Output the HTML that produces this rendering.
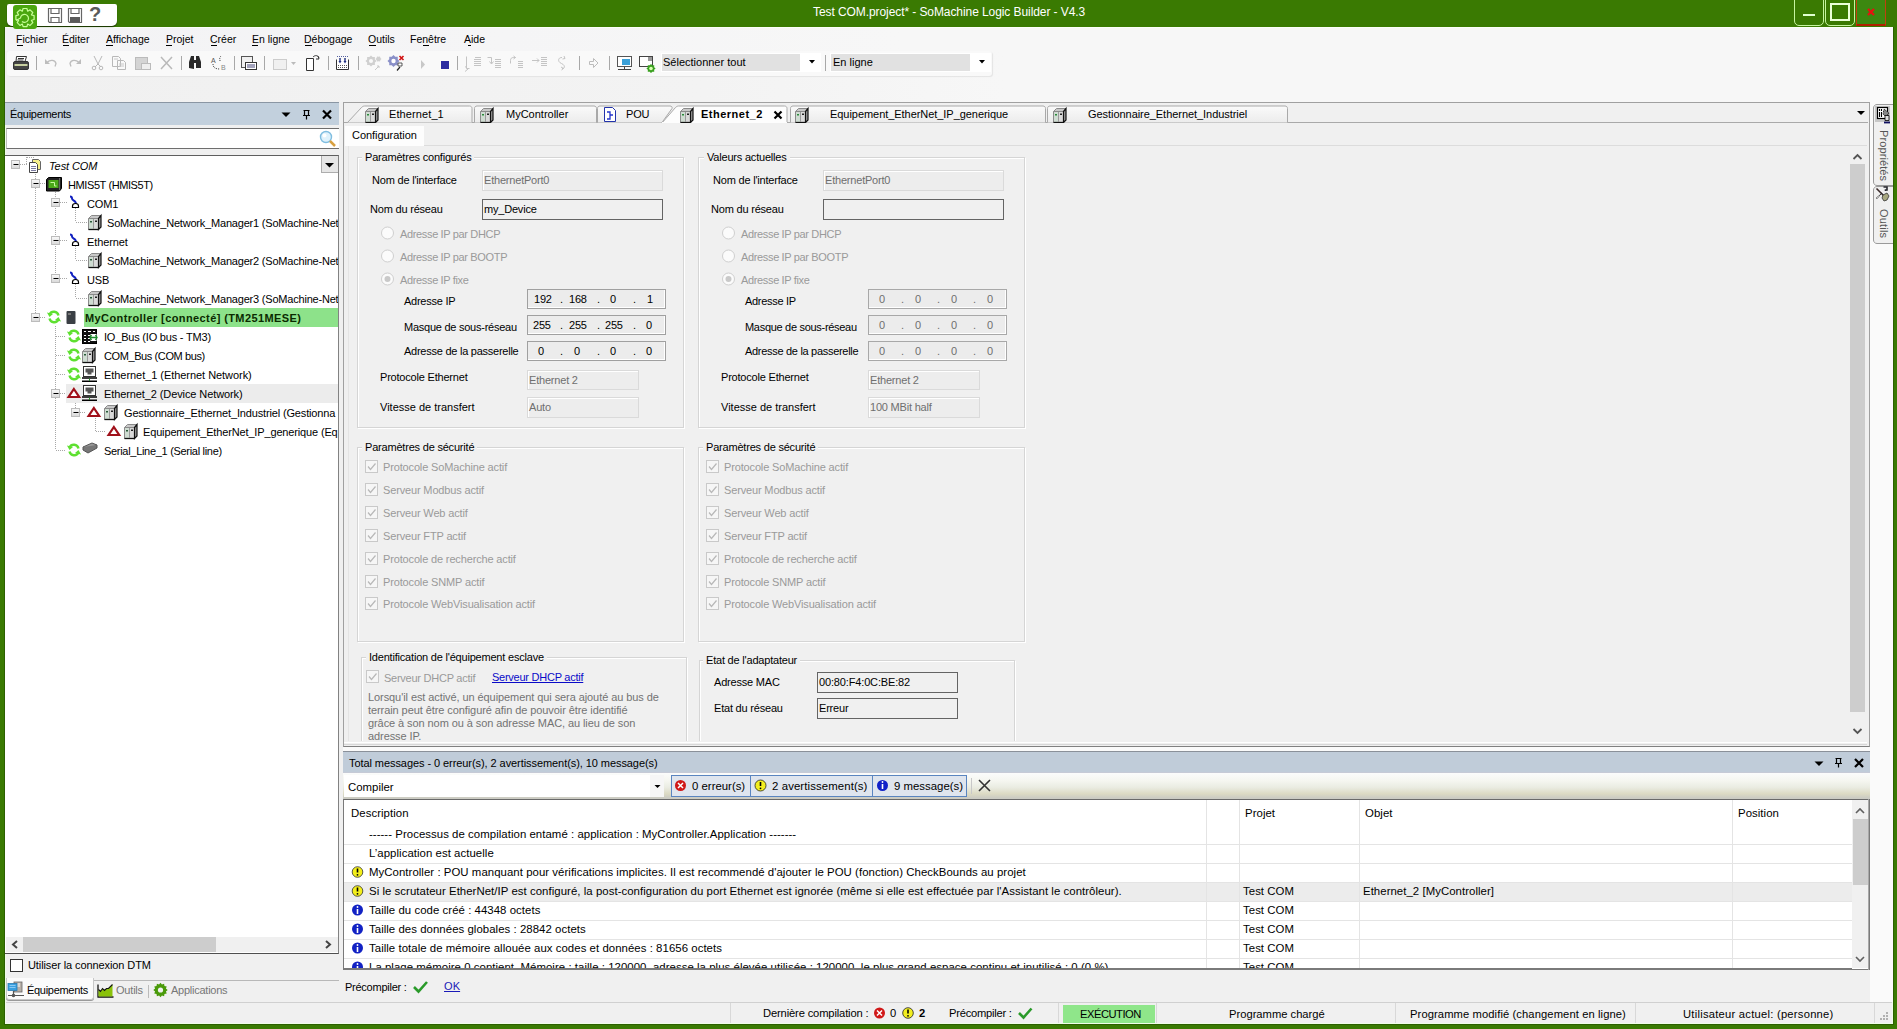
<!DOCTYPE html>
<html><head><meta charset="utf-8">
<style>
*{box-sizing:border-box;margin:0;padding:0}
html,body{width:1897px;height:1029px;overflow:hidden;background:#3a7a02;font-family:"Liberation Sans",sans-serif;font-size:11px;color:#000}
.a{position:absolute}
.t{position:absolute;white-space:pre;line-height:13px;font-size:11px}
.e{letter-spacing:-0.2px}
.g{color:#9a9a9a}
.gi{color:#6f6f6f}
.gb{position:absolute;border:1px solid #d5d5d5;box-shadow:inset 1px 1px 0 #fff,1px 1px 0 #fff}
.tb{position:absolute;border:1px solid #dadada;background:#ededed;box-shadow:inset 1px 1px 0 #fff}
.ip{position:absolute;border:1px solid #9c9c9c;background:#f0f0f0;box-shadow:inset 1px 1px 0 #fff}
.cb{position:absolute;width:13px;height:13px;border:1px solid #c8c8c8;background:#f4f4f4}
</style></head><body>
<!-- inner window -->
<div class="a" style="left:4px;top:27px;width:1890px;height:998px;background:#f0f0f0;border:1px solid #2c6000;border-top:none;box-shadow:inset 1px 0 0 #effee8,inset -1px -1px 0 #effee8"></div>
<div class="a" style="left:5px;top:27px;width:1888px;height:24px;background:linear-gradient(90deg,#f3f3f5 0,#f5f5f6 500px,#f7f7f7 900px)"></div>
<div class="a" style="left:5px;top:51px;width:1888px;height:51px;background:linear-gradient(90deg,#f0f0f0 0,#f3f3f3 700px,#f7f7f7 1000px)"></div>
<!-- right strip -->
<div class="a" style="left:1870px;top:27px;width:23px;height:975px;background:#fafafa"></div>

<div class="a" style="left:5px;top:27px;width:1888px;height:1px;background:#fbfff8"></div>
<!-- title bar -->
<div class="a" style="left:7px;top:4px;width:110px;height:22px;background:#fff;border-radius:2px 2px 5px 5px;box-shadow:0 1px 1px #1a3300"></div>
<div class="a" style="left:13px;top:5px;width:24px;height:24px;background:#4ba70f;border-radius:3px"></div>
<svg class="a" style="left:0;top:0" width="40" height="32" viewBox="0 0 40 32"><path d="M22.38 11.11 L23.07 8.50 L26.93 8.50 L27.62 11.11 L27.74 11.16 L30.07 9.80 L32.80 12.53 L31.44 14.86 L31.49 14.98 L34.10 15.67 L34.10 19.53 L31.49 20.22 L31.44 20.34 L32.80 22.67 L30.07 25.40 L27.74 24.04 L27.62 24.09 L26.93 26.70 L23.07 26.70 L22.38 24.09 L22.26 24.04 L19.93 25.40 L17.20 22.67 L18.56 20.34 L18.51 20.22 L15.90 19.53 L15.90 15.67 L18.51 14.98 L18.56 14.86 L17.20 12.53 L19.93 9.80 L22.26 11.16Z" fill="none" stroke="#c8ff98" stroke-width="1.2" stroke-linejoin="round"/><path d="M22 21.5a4 4 0 1 0-1.5-3.5L16 20.5" fill="none" stroke="#c8ff98" stroke-width="1.2"/></svg>
<svg class="a" style="left:47px;top:7px" width="16" height="16" viewBox="0 0 16 16"><path d="M1.5 1.5h13v14h-12l-1-1z M4 1.5v5h8v-5 M4 15.5v-5h8v5" fill="none" stroke="#666" stroke-width="1.2"/></svg>
<svg class="a" style="left:67px;top:7px" width="16" height="16" viewBox="0 0 16 16"><path d="M1.5 1.5h13v14h-12l-1-1z M4 1.5v5h8v-5" fill="none" stroke="#666" stroke-width="1.2"/><rect x="3" y="10" width="10" height="5.5" fill="#5a5a5a"/></svg>
<div class="a" style="left:89px;top:3px;font:bold 20px 'Liberation Sans';color:#5a5a5a;line-height:22px">?</div>
<div class="t" style="left:813px;top:5px;font-size:12px;color:#fff;line-height:14px;letter-spacing:-0.08px">Test COM.project* - SoMachine Logic Builder - V4.3</div>
<!-- window buttons -->
<div class="a" style="left:1794px;top:-3px;width:30px;height:29px;border:1px solid #c6f5a0;border-radius:0 0 5px 5px"></div>
<div class="a" style="left:1803px;top:14px;width:12px;height:2px;background:#e0ffd0"></div>
<div class="a" style="left:1825px;top:-3px;width:30px;height:29px;border:1px solid #c6f5a0;border-radius:0 0 5px 5px"></div>
<div class="a" style="left:1830px;top:3px;width:20px;height:18px;border:2px solid #eaffd8"></div>
<div class="a" style="left:1856px;top:-3px;width:30px;height:29px;border:1px solid #c04010;border-bottom:2px solid #b02000;background:#3c8810"></div>
<svg class="a" style="left:1866px;top:7px" width="10" height="10"><path d="M2 2l6 6M8 2l-6 6" stroke="#e81010" stroke-width="2.2"/></svg>

<!-- menubar -->
<div class="t" style="left:16px;top:33px;font-size:10.5px">Fichier</div>
<div class="t" style="left:62px;top:33px;font-size:10.5px">Éditer</div>
<div class="t" style="left:106px;top:33px;font-size:10.5px">Affichage</div>
<div class="t" style="left:166px;top:33px;font-size:10.5px">Projet</div>
<div class="t" style="left:210px;top:33px;font-size:10.5px">Créer</div>
<div class="t" style="left:252px;top:33px;font-size:10.5px">En ligne</div>
<div class="t" style="left:304px;top:33px;font-size:10.5px">Débogage</div>
<div class="t" style="left:368px;top:33px;font-size:10.5px">Outils</div>
<div class="t" style="left:410px;top:33px;font-size:10.5px">Fenêtre</div>
<div class="t" style="left:464px;top:33px;font-size:10.5px">Aide</div>
<div class="a" style="left:17px;top:45px;width:6px;height:1px;background:#000"></div>
<div class="a" style="left:63px;top:45px;width:6px;height:1px;background:#000"></div>
<div class="a" style="left:106px;top:45px;width:7px;height:1px;background:#000"></div>
<div class="a" style="left:166px;top:45px;width:6px;height:1px;background:#000"></div>
<div class="a" style="left:211px;top:45px;width:6px;height:1px;background:#000"></div>
<div class="a" style="left:252px;top:45px;width:6px;height:1px;background:#000"></div>
<div class="a" style="left:305px;top:45px;width:7px;height:1px;background:#000"></div>
<div class="a" style="left:369px;top:45px;width:7px;height:1px;background:#000"></div>
<div class="a" style="left:423px;top:45px;width:6px;height:1px;background:#000"></div>
<div class="a" style="left:468px;top:45px;width:3px;height:1px;background:#000"></div>

<!-- toolbar -->
<div class="a" style="left:7px;top:51px;width:985px;height:25px;background:#f9f9f9;border-radius:3px;box-shadow:1px 1px 1px #e4e4e4"></div>
<svg class="a" style="left:0;top:50px" width="1000" height="26" viewBox="0 50 1000 26">
<g fill="none" stroke-width="1">
<!-- printer -->
<path d="M16.5 56.5h10l-1.5 5h-9z" stroke="#333" fill="#fff"/>
<path d="M18 58.5h6M17.5 60h6" stroke="#333"/>
<rect x="13.5" y="61.5" width="15" height="8" rx="1.5" fill="#444" stroke="#333"/>
<rect x="14.5" y="64" width="13" height="2" fill="#c8d0a0" stroke="none"/>
<!-- separators -->
<path d="M36.5 56v14M181.5 56v14M234.5 56v14M264.5 56v14M328.5 56v14M358.5 56v14M457.5 56v14M579.5 56v14M609.5 56v14M825.5 55v16" stroke="#a8a8a8"/>
<!-- undo/redo -->
<path d="M47 62.5c3-3 8-3 9 1l-1 3" stroke="#bdbdbd" stroke-width="1.3"/><path d="M45 59v5h5z" fill="#bdbdbd" stroke="none"/>
<path d="M79 62.5c-3-3-8-3-9 1l1 3" stroke="#bdbdbd" stroke-width="1.3"/><path d="M81 59v5h-5z" fill="#bdbdbd" stroke="none"/>
<!-- scissors -->
<path d="M94 56l4 8 4-8M98 64l-3 3M98 64l3 3" stroke="#b8b8b8"/><circle cx="94" cy="68" r="1.8" stroke="#b8b8b8"/><circle cx="101" cy="68" r="1.8" stroke="#b8b8b8"/>
<!-- copy -->
<path d="M112.5 56.5h6l2 2v8h-8z M117.5 60.5h6l2 2v7h-8z" stroke="#b8b8b8" fill="#f9f9f9"/><path d="M119 64h5M119 66h5M114 59h4" stroke="#c8c8c8"/>
<!-- paste -->
<rect x="135.5" y="57.5" width="12" height="12" stroke="#bbb" fill="#d4d4d4"/><rect x="141.5" y="63.5" width="9" height="6" stroke="#bbb" fill="#eee"/>
<!-- delete X -->
<path d="M161 57l11 12M172 57l-11 12" stroke="#b9b9b9" stroke-width="1.5"/>
<!-- binoculars -->
<path d="M189 68v-6l2-6h3v13zM196 56h3l2 6v6h-5z" fill="#2a2a2a" stroke="none"/><rect x="194" y="60" width="2" height="3" fill="#2a2a2a"/>
<!-- AB -->
<text x="211" y="63" font-family="Liberation Sans" font-size="7" fill="#555">A</text><text x="221" y="70" font-family="Liberation Sans" font-size="7" fill="#888">B</text>
<path d="M213 64c0 4 3 5 7 5M220 61c0-2-1-3 1-5" stroke="#444" stroke-dasharray="1 1"/>
<!-- icon 249 -->
<rect x="241.5" y="56.5" width="11" height="11" stroke="#555" fill="#f0f0f0"/><rect x="245.5" y="62.5" width="11" height="7" stroke="#333" fill="#fff"/><path d="M247 65h8M247 67h8" stroke="#447"/>
<!-- gray icon -->
<rect x="273.5" y="59.5" width="13" height="10" stroke="#ccc" fill="#f0f0f0"/><path d="M291 62h5l-2.5 3z" fill="#bbb" stroke="none"/>
<!-- page -->
<path d="M306.5 58.5h7v12h-7z" stroke="#333" fill="#fff"/><path d="M313 57c2-2 5-2 6 1" stroke="#333"/><path d="M318 56l1 3-3 0" stroke="#333"/>
<!-- calendar -->
<path d="M336.5 59.5v10h12v-10" stroke="#333" fill="#fff"/><path d="M338 65.5h9M338 67.5h9" stroke="#555" stroke-dasharray="1 1"/><path d="M337 56.5h11" stroke="#5560a0" stroke-dasharray="1 1"/><path d="M340 58v4M345 58v4" stroke="#203080" stroke-width="1.4"/><path d="M338.5 61l1.5 2.5 1.5-2.5zM343.5 61l1.5 2.5 1.5-2.5z" fill="#203080"/>
<!-- gray gear -->
<path d="M376.50 61.00 L374.88 62.61 L374.89 64.89 L372.61 64.88 L371.00 66.50 L369.39 64.88 L367.11 64.89 L367.12 62.61 L365.50 61.00 L367.12 59.39 L367.11 57.11 L369.39 57.12 L371.00 55.50 L372.61 57.12 L374.89 57.11 L374.88 59.39Z" fill="#d0d0d0"/><circle cx="371" cy="61" r="2" fill="#f9f9f9"/><path d="M381.50 59.00 L380.41 60.10 L380.00 61.60 L378.50 61.20 L377.00 61.60 L376.59 60.10 L375.50 59.00 L376.59 57.90 L377.00 56.40 L378.50 56.80 L380.00 56.40 L380.41 57.90Z" fill="#d0d0d0"/><path d="M375 70l4-4M377 66h2v2" stroke="#c8c8c8"/>
<!-- gear with x -->
<path d="M399.50 61.00 L397.75 62.76 L397.74 65.24 L395.26 65.25 L393.50 67.00 L391.74 65.25 L389.26 65.24 L389.25 62.76 L387.50 61.00 L389.25 59.24 L389.26 56.76 L391.74 56.75 L393.50 55.00 L395.26 56.75 L397.74 56.76 L397.75 59.24Z" fill="#8a90c8"/><circle cx="393.5" cy="61" r="2.2" fill="#fff"/><path d="M399.5 56l4 4M403.5 56l-4 4" stroke="#d01010" stroke-width="1.6"/><path d="M398 63h4v3h-4z" fill="#fff" stroke="#333" stroke-width=".8"/><path d="M397 70.5l3-3.5" stroke="#222" stroke-width="1.2"/>
<!-- play -->
<path d="M421 60v9l4-4.5z" fill="#c8c8c8" stroke="none"/>
<!-- stop -->
<rect x="441" y="61" width="8" height="8" fill="#2b2ba0" stroke="none"/>
<!-- indent icons -->
<path d="M466.5 56.5v12h3M465 66.5l3 2.5-3 2.5M475 57.5h6M474 59.5h7M474 61.5h7M474 63.5h7M474 65.5h7" stroke="#c4c4c4"/>
<path d="M487.5 57.5h4v6M489.5 61.5l2 2.5 2-2.5M495 59.5h6M495 61.5h6M495 63.5h6M495 65.5h6M495 67.5h6" stroke="#c4c4c4"/>
<path d="M510.5 63.5v-3c0-2 1-3 3-3h2M513.5 56l2 1.5-2 1.5M518 61.5h5M518 63.5h5M518 65.5h5M518 67.5h5" stroke="#c4c4c4"/>
<path d="M532 60.5h7M537 58.5l2 2-2 2M541 57.5h6M541 59.5h6M541 61.5h6M541 63.5h6M541 65.5h6" stroke="#c4c4c4"/>
<path d="M562 57.5c-3 0-4 2-3 4 1 2 4 2 5 4s0 3-2 3M564 56l1 2.5-2.5 .5M561 67l2.5 1.5-2 1.5" stroke="#c4c4c4"/>
<!-- arrow right -->
<path d="M589.5 61.5h4v-3l4.5 4.5-4.5 4.5v-3h-4z" stroke="#bcbcbc"/>
<!-- monitor -->
<rect x="617.5" y="56.5" width="14" height="10" stroke="#555" fill="#fff"/><rect x="622" y="59" width="8" height="6" fill="#3ba0d8" stroke="none"/><path d="M624.5 67v2M618 69.5h13" stroke="#444"/>
<!-- monitor w gear -->
<rect x="639.5" y="56.5" width="13" height="10" stroke="#444" fill="#fff"/><rect x="648" y="57" width="4" height="4" fill="#999"/><path d="M655.60 68.50 L654.14 69.80 L654.25 71.75 L652.30 71.64 L651.00 73.10 L649.70 71.64 L647.75 71.75 L647.86 69.80 L646.40 68.50 L647.86 67.20 L647.75 65.25 L649.70 65.36 L651.00 63.90 L652.30 65.36 L654.25 65.25 L654.14 67.20Z" fill="#3aa020" stroke="none"/><circle cx="651" cy="68.5" r="1.8" fill="#d8ffb0"/>
<!-- combo arrows -->

</g></svg>
<div class="a" style="left:661px;top:53px;width:160px;height:19px;background:#fff"></div><div class="a" style="left:662px;top:54px;width:138px;height:17px;background:#e1e1e1"></div>
<div class="t" style="left:663px;top:56px">Sélectionner tout</div>
<div class="a" style="left:830px;top:53px;width:161px;height:19px;background:#fff"></div><div class="a" style="left:831px;top:54px;width:139px;height:17px;background:#e1e1e1"></div>
<div class="t" style="left:833px;top:56px">En ligne</div>
<svg class="a" style="left:800px;top:55px" width="190" height="15" viewBox="800 55 190 15"><path d="M809 60h6l-3 3.5z M979 60h6l-3 3.5z" fill="#000"/></svg>

<!-- left panel -->
<div class="a" style="left:5px;top:102px;width:334px;height:23px;background:#c2d0dd;border-top:1px solid #8a96a3"></div>
<div class="t" style="left:10px;top:108px;letter-spacing:-0.3px">Équipements</div>
<svg class="a" style="left:278px;top:106px" width="60" height="16" viewBox="278 106 60 16">
<path d="M281.5 112.5h9l-4.5 4.5z" fill="#000"/>
<path d="M303.5 110.5h6M304.5 110.5v5M308.5 110.5v5M303 115.5h7M306.5 115.5v4" stroke="#000" stroke-width="1.2" fill="none"/>
<path d="M323 110.5l8 8M331 110.5l-8 8" stroke="#000" stroke-width="2.2"/>
</svg>
<div class="a" style="left:6px;top:128px;width:333px;height:21px;background:#fff;border-top:1px solid #6e6e6e;border-bottom:1px solid #6e6e6e;border-left:1px solid #bdbdbd"></div>
<svg class="a" style="left:318px;top:130px" width="20" height="18" viewBox="0 0 20 18"><circle cx="8" cy="7" r="5.5" fill="#dff2fc" stroke="#7fbde0" stroke-width="1.4"/><circle cx="6.5" cy="5.5" r="2" fill="#fff"/><path d="M12 11l5 5" stroke="#d8a040" stroke-width="2.5"/></svg>
<div class="a" style="left:5px;top:155px;width:334px;height:799px;background:#fff;border-top:1px solid #5f5f5f;border-right:1px solid #828282;border-bottom:1px solid #4f4f4f"></div>
<div class="a" style="left:321px;top:156px;width:17px;height:17px;background:#e6e6e6;border:1px solid #adadad;border-top:none;border-right:none"></div>
<svg class="a" style="left:321px;top:156px" width="17" height="17"><path d="M4 7h9l-4.5 4.5z" fill="#000"/></svg>
<!-- tree lines -->
<svg class="a" style="left:5px;top:155px" width="334" height="310" viewBox="5 155 334 310">
<g stroke="#a8a8a8" stroke-width="1" stroke-dasharray="1 1" fill="none">
<path d="M20 164.5h8M35.5 170v10M40 183.5h6M35.5 188v126M55.5 188v11M60 202.5h8M55.5 208v29M60 240.5h8M55.5 246v29M60 278.5h8"/>
<path d="M75.5 208v14M76 222.5h12M75.5 246v14M76 260.5h12M75.5 284v14M76 298.5h12"/>
<path d="M40 317.5h6M55.5 326v124M56 450.5h10M56 336.5h10M56 355.5h10M56 374.5h10M60 393.5h6"/>
<path d="M75.5 403v6M80 412.5h6M95.5 418v13M96 431.5h10"/>
<path d="M26.5 157v8M27 157.5h8"/>
</g>
<defs><linearGradient id="eg" x1="0" y1="0" x2="0" y2="1"><stop offset="0" stop-color="#fafafa"/><stop offset="1" stop-color="#d8d8d8"/></linearGradient></defs><g fill="url(#eg)" stroke="#bcbcbc">
<rect x="11.5" y="160.5" width="8" height="8"/><rect x="31.5" y="179.5" width="8" height="8"/>
<rect x="51.5" y="198.5" width="8" height="8"/><rect x="51.5" y="236.5" width="8" height="8"/><rect x="51.5" y="274.5" width="8" height="8"/>
<rect x="31.5" y="313.5" width="8" height="8"/><rect x="51.5" y="389.5" width="8" height="8"/><rect x="71.5" y="408.5" width="8" height="8"/>
</g>
<g stroke="#000" stroke-width="1.2"><path d="M13.5 164.5h5M33.5 183.5h5M53.5 202.5h5M53.5 240.5h5M53.5 278.5h5M33.5 317.5h5M53.5 393.5h5M73.5 412.5h5"/></g>
</g>
</svg>
<!-- highlights -->
<div class="a" style="left:84px;top:308px;width:254px;height:19px;background:#8de28a"></div>
<div class="a" style="left:66px;top:384px;width:272px;height:19px;background:#ececec"></div>
<!-- tree text -->
<div class="t" style="left:49px;top:160px;font-style:italic;letter-spacing:-0.1px">Test COM</div>
<div class="t" style="left:68px;top:179px;letter-spacing:-0.4px">HMIS5T (HMIS5T)</div>
<div class="t" style="left:87px;top:198px;letter-spacing:-0.1px">COM1</div>
<div class="t" style="left:107px;top:217px;letter-spacing:-0.2px">SoMachine_Network_Manager1 (SoMachine-Net</div>
<div class="t" style="left:87px;top:236px;letter-spacing:-0.1px">Ethernet</div>
<div class="t" style="left:107px;top:255px;letter-spacing:-0.2px">SoMachine_Network_Manager2 (SoMachine-Net</div>
<div class="t" style="left:87px;top:274px;letter-spacing:-0.1px">USB</div>
<div class="t" style="left:107px;top:293px;letter-spacing:-0.2px">SoMachine_Network_Manager3 (SoMachine-Net</div>
<div class="t" style="left:85px;top:312px;font-weight:bold;letter-spacing:0.4px;color:#0a2a00">MyController [connecté] (TM251MESE)</div>
<div class="t" style="left:104px;top:331px;letter-spacing:-0.2px">IO_Bus (IO bus - TM3)</div>
<div class="t" style="left:104px;top:350px;letter-spacing:-0.4px">COM_Bus (COM bus)</div>
<div class="t" style="left:104px;top:369px;letter-spacing:-0.05px">Ethernet_1 (Ethernet Network)</div>
<div class="t" style="left:104px;top:388px;letter-spacing:-0.1px">Ethernet_2 (Device Network)</div>
<div class="t" style="left:124px;top:407px;letter-spacing:-0.15px">Gestionnaire_Ethernet_Industriel (Gestionna</div>
<div class="t" style="left:143px;top:426px;letter-spacing:-0.15px">Equipement_EtherNet_IP_generique (Eq</div>
<div class="t" style="left:104px;top:445px;letter-spacing:-0.3px">Serial_Line_1 (Serial line)</div>
<div class="a" style="left:338px;top:173px;width:1px;height:780px;background:#828282"></div>
<!-- tree icons -->
<svg class="a" style="left:5px;top:155px" width="334" height="310" viewBox="5 155 334 310">
<!-- project -->
<path d="M32.5 159.5h6l2 2v8h-8z" fill="#f6f08a" stroke="#666"/><path d="M29.5 162.5h6l2 2v8h-8z" fill="#fff" stroke="#444"/><path d="M31 166.5h5M31 168.5h5M31 170.5h5" stroke="#7a7aa0"/>
<!-- HMI -->
<path d="M46.5 179.5l2-2h13v11l-2 2.5h-13z" fill="#222" stroke="#000"/><path d="M59.5 178v12" stroke="#666"/><rect x="48.5" y="180" width="10" height="8" fill="#4aa818"/><path d="M50.5 182.5h4v3.5h2" stroke="#c8f8a0" fill="none"/>
<!-- connectors -->
<g id="cn"><path d="M70 196.5c1.5 0 2 1 2 2 0 1.5 2 2 3 3s1 2 1 3" stroke="#1020c0" stroke-width="2" fill="none"/><path d="M72.5 207.5v-1.5c0-1.5 1.5-2.5 3-2.5s3 1 3 2.5v1.5z" fill="#fff" stroke="#000" stroke-width="1.2"/></g>
<use href="#cn" y="38"/><use href="#cn" y="76"/>
<!-- devices -->
<g id="dv"><path d="M88.5 218.5l3-3h9.5l-2.5 3z" fill="#c8c8c8" stroke="#8a8a8a"/><path d="M88.5 218.5h10v11h-10z" fill="#dadada" stroke="#8a8a8a"/><path d="M89 219h4v10h-4z" fill="#cfdcd2"/><path d="M98.5 229.5l2.5-2.5v-11.5l-2.5 3z" fill="#9a9a9a" stroke="#111" stroke-width="1.2"/><path d="M88.5 229.5h10" stroke="#111" stroke-width="1.3"/><path d="M93.5 219v10" stroke="#9a9a9a"/><rect x="90" y="221" width="2" height="1.5" fill="#2a5a3a"/><rect x="95" y="220.5" width="2" height="1.5" fill="#222"/></g>
<use href="#dv" y="38"/><use href="#dv" y="76"/>
<use href="#dv" x="-6" y="133"/>
<use href="#dv" x="16" y="190"/>
<use href="#dv" x="36" y="209"/>
<!-- controller -->
<rect x="66.5" y="311" width="9" height="13" rx="1" fill="#3a3f44"/><rect x="68" y="313" width="3" height="2" fill="#777"/>
<!-- sync icons -->
<g id="sy" fill="none" stroke="#5ee030"><path d="M58.5 315.5a4.8 4.8 0 0 0-9-1" stroke-width="2.4"/><path d="M47 312.5l2.5 4.5 3.5-3z" fill="#5ee030" stroke="none"/><path d="M49.5 318.5a4.8 4.8 0 0 0 9 1" stroke-width="2.4"/><path d="M61 321.5l-2.5-4.5-3.5 3z" fill="#5ee030" stroke="none"/></g>
<use href="#sy" x="20" y="19"/><use href="#sy" x="20" y="38"/><use href="#sy" x="20" y="57"/><use href="#sy" x="20" y="133"/>
<!-- IO bus -->
<rect x="82.5" y="329.5" width="14" height="14" fill="#111" stroke="#000"/><path d="M84 331.5h2M88 331.5h3M93 331.5h2" stroke="#fff" stroke-width="1.2"/><path d="M84 335.5h2M84 338.5h2M84 341.5h2M88 335.5h2M88 338.5h2M88 341.5h2" stroke="#fff"/><rect x="90.5" y="334" width="6" height="7" fill="#fff"/><path d="M90.5 337.5h6M91.5 335l-1.5 2.5 1.5 2.5M95.5 335l1.5 2.5-1.5 2.5" stroke="#1a8a2a" stroke-width="1.4" fill="none"/>
<!-- network icons -->
<g id="nw"><rect x="83.5" y="366.5" width="12" height="10" fill="#fff" stroke="#333"/><path d="M85.5 368.5h8v4h-2v2h-4v-2h-2z" fill="#555"/><path d="M82 378h15M82 381.2h15" stroke="#000" stroke-width="1.6"/><path d="M89.5 378.5v2.5" stroke="#2a8a2a"/></g>
<use href="#nw" y="19"/>
<!-- warning triangles -->
<g id="wt"><path d="M73.9 389l5.3 8h-10.6z" fill="#fff" stroke="#a0101a" stroke-width="2.2" stroke-linejoin="miter" stroke-miterlimit="3"/></g>
<use href="#wt" x="20" y="19"/><use href="#wt" x="40" y="38"/>
<!-- serial -->
<path d="M83 447l9-4 5 2-9 5z" fill="#999" stroke="#555"/><path d="M83 447v3l5 3 9-5v-3" fill="#777" stroke="#555"/>
</svg>
<!-- hscroll -->
<div class="a" style="left:6px;top:937px;width:332px;height:15px;background:#f0f0f0"></div>
<div class="a" style="left:23px;top:937px;width:193px;height:15px;background:#cdcdcd"></div>
<svg class="a" style="left:6px;top:937px" width="332" height="15"><path d="M11 4l-4 3.5 4 3.5M320 4l4 3.5-4 3.5" stroke="#444" stroke-width="2" fill="none"/></svg>
<!-- dtm checkbox -->
<div class="a" style="left:10px;top:959px;width:13px;height:13px;background:#fff;border:1px solid #333"></div>
<div class="t" style="left:28px;top:959px;letter-spacing:-0.1px">Utiliser la connexion DTM</div>
<!-- bottom tabs -->
<div class="a" style="left:93px;top:980px;width:246px;height:1px;background:#b8b8b8"></div>

<div class="a" style="left:6px;top:978px;width:88px;height:22px;background:#fbfbfb;border:1px solid #c8c8c8;border-top:none;border-radius:0 0 3px 3px;box-shadow:0 1px 0 #9a9a9a"></div>
<svg class="a" style="left:5px;top:980px" width="170" height="20" viewBox="5 980 170 20">
<rect x="14" y="982" width="8" height="10" fill="#b8b0a8" stroke="#666" stroke-width=".8"/><path d="M16 984h4M16 986h4" stroke="#fff"/>
<rect x="8" y="983.5" width="9" height="7" fill="#3aa0e0" stroke="#2a7ab0" stroke-width=".8"/><path d="M9.5 985.5h6M9.5 987.5h6" stroke="#bfe4ff" stroke-width=".6"/>
<path d="M8 995.5h16M13.5 991v4" stroke="#555" stroke-width="1.2"/><circle cx="13.5" cy="995.5" r="1.8" fill="#555"/>
<path d="M98 997.5v-13M97.5 997h16" stroke="#111" stroke-width="1.3"/><path d="M98.5 996.5v-7l2 2 2-3 2 2 2-2 2 0 4-4v12z" fill="#8ac20a"/><path d="M98.5 989.5l2 2 2-3 2 2 2-2 2 0 4-4" stroke="#111" stroke-width="1.1" fill="none"/>
<path d="M148.5 985v13" stroke="#bbb"/>
<path d="M167.70 990.00 L165.91 991.45 L166.74 993.60 L164.46 993.96 L164.10 996.24 L161.95 995.41 L160.50 997.20 L159.05 995.41 L156.90 996.24 L156.54 993.96 L154.26 993.60 L155.09 991.45 L153.30 990.00 L155.09 988.55 L154.26 986.40 L156.54 986.04 L156.90 983.76 L159.05 984.59 L160.50 982.80 L161.95 984.59 L164.10 983.76 L164.46 986.04 L166.74 986.40 L165.91 988.55Z" fill="#4a9a0a"/><circle cx="160.5" cy="990" r="2.6" fill="#f0f0f0"/>
</svg>
<div class="t" style="left:27px;top:984px;letter-spacing:-0.3px">Équipements</div>
<div class="t" style="left:116px;top:984px;color:#777;letter-spacing:-0.2px">Outils</div>
<div class="t" style="left:171px;top:984px;color:#777;letter-spacing:-0.25px">Applications</div>

<!-- editor -->
<div class="a" style="left:343px;top:746px;width:1527px;height:5px;background:#fafafa"></div>
<div class="a" style="left:343px;top:102px;width:1527px;height:645px;background:#f0f0f0;border:1px solid #a0a0a0;border-bottom-color:#808080"></div>
<svg class="a" style="left:344px;top:103px" width="1525" height="21" viewBox="344 103 1525 21">
<defs><linearGradient id="tg" x1="0" y1="0" x2="0" y2="1"><stop offset="0" stop-color="#fafafa"/><stop offset="1" stop-color="#ececec"/></linearGradient></defs>
<path d="M344 122.5H1868" stroke="#a9a9a9"/>
<path d="M347.5 122.5l14-15c1-1 2-1.5 3-1.5h105c1.5 0 2.5 1 2.5 2.5V122.5" fill="url(#tg)" stroke="#a9a9a9"/>
<path d="M474.5 122.5V108.5c0-1.5 1-2.5 2.5-2.5h117c1.5 0 2.5 1 2.5 2.5V122.5" fill="url(#tg)" stroke="#a9a9a9"/>
<path d="M597.5 122.5V108.5c0-1.5 1-2.5 2.5-2.5h70c1.5 0 2.5 1 2 2.5l-10 14" fill="url(#tg)" stroke="#a9a9a9"/>
<path d="M790.5 122.5V108.5c0-1.5 1-2.5 2.5-2.5h250c1.5 0 2.5 1 2.5 2.5V122.5" fill="url(#tg)" stroke="#a9a9a9"/>
<path d="M1047.5 122.5V108.5c0-1.5 1-2.5 2.5-2.5h235c1.5 0 2.5 1 2.5 2.5V122.5" fill="url(#tg)" stroke="#a9a9a9"/>
<path d="M661.5 123.5l14-16c1-1 2-1.5 3-1.5h106c1.5 0 2.5 1 2.5 2.5V123.5z" fill="#fdfdfd" stroke="#a9a9a9"/>
<path d="M662 123h125" stroke="#fdfdfd" stroke-width="2"/>
<path d="M1857 111h8l-4 4z" fill="#000"/>
<path d="M774.5 111.5l7 7M781.5 111.5l-7 7" stroke="#000" stroke-width="2.2"/>
<g id="ti"><path d="M365.5 111.5l3-3h9.5l-2.5 3z" fill="#c8c8c8" stroke="#8a8a8a"/><path d="M365.5 111.5h10v11h-10z" fill="#dadada" stroke="#8a8a8a"/><path d="M366 112h4v10h-4z" fill="#cfdcd2"/><path d="M375.5 122.5l2.5-2.5v-11.5l-2.5 3z" fill="#9a9a9a" stroke="#111" stroke-width="1.2"/><path d="M365.5 122.5h10" stroke="#111" stroke-width="1.3"/><path d="M370.5 112v10" stroke="#9a9a9a"/><rect x="367" y="114" width="2" height="1.5" fill="#2a8a3a"/><rect x="372" y="113.5" width="2" height="1.5" fill="#222"/></g>
<use href="#ti" x="115"/><use href="#ti" x="315"/><use href="#ti" x="430"/><use href="#ti" x="688"/>
<path d="M604.5 107.5h8l3 3v11h-11z" fill="#fff" stroke="#2233aa"/><path d="M607 112h3v7h-3M610 115h3" stroke="#2233cc" stroke-width="1.3" fill="none"/>
</svg>
<div class="t e" style="left:389px;top:108px;letter-spacing:0.1px">Ethernet_1</div>
<div class="t e" style="left:506px;top:108px;letter-spacing:0px">MyController</div>
<div class="t e" style="left:626px;top:108px;">POU</div>
<div class="t" style="left:701px;top:108px;font-weight:bold;letter-spacing:0.5px">Ethernet_2</div>
<div class="t e" style="left:830px;top:108px;letter-spacing:-0.05px">Equipement_EtherNet_IP_generique</div>
<div class="t e" style="left:1088px;top:108px;letter-spacing:-0.05px">Gestionnaire_Ethernet_Industriel</div>
<div class="a" style="left:344px;top:123px;width:1525px;height:23px;background:#f0f0f0"></div>
<div class="a" style="left:345px;top:126px;width:79px;height:20px;background:#fdfdfd"></div>
<div class="a" style="left:424px;top:145px;width:1443px;height:1px;background:#dcdcdc"></div>
<div class="t" style="left:352px;top:129px;letter-spacing:-0.05px">Configuration</div>
<div class="a" style="left:348px;top:146px;width:1520px;height:596px;background:#f0f0f0;border-left:1px solid #e4e4e4"></div>
<div class="a" style="left:1850px;top:147px;width:17px;height:594px;background:#f0f0f0"></div>
<div class="a" style="left:1850px;top:164px;width:15px;height:548px;background:#cdcdcd"></div>
<svg class="a" style="left:1850px;top:147px" width="17" height="594"><path d="M3.5 12l4-4 4 4M3.5 582l4 4 4-4" stroke="#555" stroke-width="1.8" fill="none"/></svg>
<div class="gb" style="left:357px;top:157px;width:327px;height:271px;"></div>
<div class="t e" style="left:362px;top:151px;padding:0 3px;background:#f0f0f0">Paramètres configurés</div>
<div class="gb" style="left:698px;top:157px;width:327px;height:271px;"></div>
<div class="t e" style="left:704px;top:151px;padding:0 3px;background:#f0f0f0">Valeurs actuelles</div>
<div class="t e" style="left:372px;top:174px;">Nom de l'interface</div>
<div class="tb" style="left:482px;top:170px;width:181px;height:21px;"></div>
<div class="t e gi" style="left:484px;top:174px;">EthernetPort0</div>
<div class="t e" style="left:370px;top:203px;">Nom du réseau</div>
<div class="a" style="left:482px;top:199px;width:181px;height:21px;border:1px solid #646464;background:#f0f0f0"></div>
<div class="t e" style="left:484px;top:203px;">my_Device</div>
<svg class="a" style="left:381px;top:226px" width="14" height="14"><circle cx="6.5" cy="7" r="6" fill="#fbfbfb" stroke="#cfcfcf"/></svg>
<div class="t g" style="left:400px;top:228px;letter-spacing:-0.35px">Adresse IP par DHCP</div>
<svg class="a" style="left:381px;top:249px" width="14" height="14"><circle cx="6.5" cy="7" r="6" fill="#fbfbfb" stroke="#cfcfcf"/></svg>
<div class="t g" style="left:400px;top:251px;letter-spacing:-0.35px">Adresse IP par BOOTP</div>
<svg class="a" style="left:381px;top:272px" width="14" height="14"><circle cx="6.5" cy="7" r="6" fill="#fbfbfb" stroke="#cfcfcf"/><circle cx="6.5" cy="7" r="3" fill="#c9c9c9"/></svg>
<div class="t g" style="left:400px;top:274px;letter-spacing:-0.35px">Adresse IP fixe</div>
<div class="t e" style="left:404px;top:295px;letter-spacing:-0.25px">Adresse IP</div>
<div class="ip" style="left:527px;top:289px;width:139px;height:20px;border-color:#a0a0a0;background:#ececec;box-shadow:inset -1px -1px 0 #fff"></div>
<div class="t e" style="left:534px;top:293px;">192</div>
<div class="t e" style="left:569px;top:293px;">168</div>
<div class="t e" style="left:610px;top:293px;">0</div>
<div class="t e" style="left:647px;top:293px;">1</div>
<div class="t e" style="left:560px;top:293px;">.</div>
<div class="t e" style="left:597px;top:293px;">.</div>
<div class="t e" style="left:633px;top:293px;">.</div>
<div class="t e" style="left:404px;top:321px;letter-spacing:-0.25px">Masque de sous-réseau</div>
<div class="ip" style="left:527px;top:315px;width:139px;height:20px;border-color:#a0a0a0;background:#ececec;box-shadow:inset -1px -1px 0 #fff"></div>
<div class="t e" style="left:533px;top:319px;">255</div>
<div class="t e" style="left:569px;top:319px;">255</div>
<div class="t e" style="left:605px;top:319px;">255</div>
<div class="t e" style="left:646px;top:319px;">0</div>
<div class="t e" style="left:560px;top:319px;">.</div>
<div class="t e" style="left:597px;top:319px;">.</div>
<div class="t e" style="left:633px;top:319px;">.</div>
<div class="t e" style="left:404px;top:345px;letter-spacing:-0.25px">Adresse de la passerelle</div>
<div class="ip" style="left:527px;top:341px;width:139px;height:20px;border-color:#a0a0a0;background:#ececec;box-shadow:inset -1px -1px 0 #fff"></div>
<div class="t e" style="left:538px;top:345px;">0</div>
<div class="t e" style="left:574px;top:345px;">0</div>
<div class="t e" style="left:610px;top:345px;">0</div>
<div class="t e" style="left:646px;top:345px;">0</div>
<div class="t e" style="left:560px;top:345px;">.</div>
<div class="t e" style="left:597px;top:345px;">.</div>
<div class="t e" style="left:633px;top:345px;">.</div>
<div class="t e" style="left:380px;top:371px;">Protocole Ethernet</div>
<div class="tb" style="left:527px;top:370px;width:112px;height:20px;"></div>
<div class="t e gi" style="left:529px;top:374px;">Ethernet 2</div>
<div class="t e" style="left:380px;top:401px;letter-spacing:0px">Vitesse de transfert</div>
<div class="tb" style="left:527px;top:397px;width:112px;height:21px;"></div>
<div class="t e gi" style="left:529px;top:401px;">Auto</div>
<div class="t e" style="left:713px;top:174px;">Nom de l'interface</div>
<div class="tb" style="left:823px;top:170px;width:181px;height:21px;"></div>
<div class="t e gi" style="left:825px;top:174px;">EthernetPort0</div>
<div class="t e" style="left:711px;top:203px;">Nom du réseau</div>
<div class="a" style="left:823px;top:199px;width:181px;height:21px;border:1px solid #646464;background:#f0f0f0"></div>
<svg class="a" style="left:722px;top:226px" width="14" height="14"><circle cx="6.5" cy="7" r="6" fill="#fbfbfb" stroke="#cfcfcf"/></svg>
<div class="t g" style="left:741px;top:228px;letter-spacing:-0.35px">Adresse IP par DHCP</div>
<svg class="a" style="left:722px;top:249px" width="14" height="14"><circle cx="6.5" cy="7" r="6" fill="#fbfbfb" stroke="#cfcfcf"/></svg>
<div class="t g" style="left:741px;top:251px;letter-spacing:-0.35px">Adresse IP par BOOTP</div>
<svg class="a" style="left:722px;top:272px" width="14" height="14"><circle cx="6.5" cy="7" r="6" fill="#fbfbfb" stroke="#cfcfcf"/><circle cx="6.5" cy="7" r="3" fill="#c9c9c9"/></svg>
<div class="t g" style="left:741px;top:274px;letter-spacing:-0.35px">Adresse IP fixe</div>
<div class="t e" style="left:745px;top:295px;letter-spacing:-0.3px">Adresse IP</div>
<div class="ip" style="left:868px;top:289px;width:139px;height:20px;border-color:#a8a8a8;background:#ececec;box-shadow:inset -1px -1px 0 #fff"></div>
<div class="t gi" style="left:879px;top:293px;">0</div>
<div class="t gi" style="left:915px;top:293px;">0</div>
<div class="t gi" style="left:951px;top:293px;">0</div>
<div class="t gi" style="left:987px;top:293px;">0</div>
<div class="t gi" style="left:901px;top:293px;">.</div>
<div class="t gi" style="left:937px;top:293px;">.</div>
<div class="t gi" style="left:973px;top:293px;">.</div>
<div class="t e" style="left:745px;top:321px;letter-spacing:-0.3px">Masque de sous-réseau</div>
<div class="ip" style="left:868px;top:315px;width:139px;height:20px;border-color:#a8a8a8;background:#ececec;box-shadow:inset -1px -1px 0 #fff"></div>
<div class="t gi" style="left:879px;top:319px;">0</div>
<div class="t gi" style="left:915px;top:319px;">0</div>
<div class="t gi" style="left:951px;top:319px;">0</div>
<div class="t gi" style="left:987px;top:319px;">0</div>
<div class="t gi" style="left:901px;top:319px;">.</div>
<div class="t gi" style="left:937px;top:319px;">.</div>
<div class="t gi" style="left:973px;top:319px;">.</div>
<div class="t e" style="left:745px;top:345px;letter-spacing:-0.3px">Adresse de la passerelle</div>
<div class="ip" style="left:868px;top:341px;width:139px;height:20px;border-color:#a8a8a8;background:#ececec;box-shadow:inset -1px -1px 0 #fff"></div>
<div class="t gi" style="left:879px;top:345px;">0</div>
<div class="t gi" style="left:915px;top:345px;">0</div>
<div class="t gi" style="left:951px;top:345px;">0</div>
<div class="t gi" style="left:987px;top:345px;">0</div>
<div class="t gi" style="left:901px;top:345px;">.</div>
<div class="t gi" style="left:937px;top:345px;">.</div>
<div class="t gi" style="left:973px;top:345px;">.</div>
<div class="t e" style="left:721px;top:371px;">Protocole Ethernet</div>
<div class="tb" style="left:868px;top:370px;width:112px;height:20px;"></div>
<div class="t e gi" style="left:870px;top:374px;">Ethernet 2</div>
<div class="t e" style="left:721px;top:401px;letter-spacing:0px">Vitesse de transfert</div>
<div class="tb" style="left:868px;top:397px;width:112px;height:21px;"></div>
<div class="t e gi" style="left:870px;top:401px;">100 MBit half</div>
<div class="gb" style="left:357px;top:447px;width:327px;height:195px;"></div>
<div class="t e" style="left:362px;top:441px;padding:0 3px;background:#f0f0f0">Paramètres de sécurité</div>
<div class="gb" style="left:698px;top:447px;width:327px;height:195px;"></div>
<div class="t e" style="left:703px;top:441px;padding:0 3px;background:#f0f0f0">Paramètres de sécurité</div>
<svg class="a" style="left:365px;top:460px" width="14" height="14"><rect x="0.5" y="0.5" width="12" height="12" fill="#f6f6f6" stroke="#c9c9c9"/><path d="M3 6.5l2.5 3 5-6" stroke="#b8b8b8" stroke-width="1.2" fill="none"/></svg>
<div class="t g" style="left:383px;top:461px;letter-spacing:-0.15px">Protocole SoMachine actif</div>
<svg class="a" style="left:365px;top:483px" width="14" height="14"><rect x="0.5" y="0.5" width="12" height="12" fill="#f6f6f6" stroke="#c9c9c9"/><path d="M3 6.5l2.5 3 5-6" stroke="#b8b8b8" stroke-width="1.2" fill="none"/></svg>
<div class="t g" style="left:383px;top:484px;letter-spacing:-0.15px">Serveur Modbus actif</div>
<svg class="a" style="left:365px;top:506px" width="14" height="14"><rect x="0.5" y="0.5" width="12" height="12" fill="#f6f6f6" stroke="#c9c9c9"/><path d="M3 6.5l2.5 3 5-6" stroke="#b8b8b8" stroke-width="1.2" fill="none"/></svg>
<div class="t g" style="left:383px;top:507px;letter-spacing:-0.15px">Serveur Web actif</div>
<svg class="a" style="left:365px;top:529px" width="14" height="14"><rect x="0.5" y="0.5" width="12" height="12" fill="#f6f6f6" stroke="#c9c9c9"/><path d="M3 6.5l2.5 3 5-6" stroke="#b8b8b8" stroke-width="1.2" fill="none"/></svg>
<div class="t g" style="left:383px;top:530px;letter-spacing:-0.15px">Serveur FTP actif</div>
<svg class="a" style="left:365px;top:552px" width="14" height="14"><rect x="0.5" y="0.5" width="12" height="12" fill="#f6f6f6" stroke="#c9c9c9"/><path d="M3 6.5l2.5 3 5-6" stroke="#b8b8b8" stroke-width="1.2" fill="none"/></svg>
<div class="t g" style="left:383px;top:553px;letter-spacing:-0.15px">Protocole de recherche actif</div>
<svg class="a" style="left:365px;top:575px" width="14" height="14"><rect x="0.5" y="0.5" width="12" height="12" fill="#f6f6f6" stroke="#c9c9c9"/><path d="M3 6.5l2.5 3 5-6" stroke="#b8b8b8" stroke-width="1.2" fill="none"/></svg>
<div class="t g" style="left:383px;top:576px;letter-spacing:-0.15px">Protocole SNMP actif</div>
<svg class="a" style="left:365px;top:597px" width="14" height="14"><rect x="0.5" y="0.5" width="12" height="12" fill="#f6f6f6" stroke="#c9c9c9"/><path d="M3 6.5l2.5 3 5-6" stroke="#b8b8b8" stroke-width="1.2" fill="none"/></svg>
<div class="t g" style="left:383px;top:598px;letter-spacing:-0.15px">Protocole WebVisualisation actif</div>
<svg class="a" style="left:706px;top:460px" width="14" height="14"><rect x="0.5" y="0.5" width="12" height="12" fill="#f6f6f6" stroke="#c9c9c9"/><path d="M3 6.5l2.5 3 5-6" stroke="#b8b8b8" stroke-width="1.2" fill="none"/></svg>
<div class="t g" style="left:724px;top:461px;letter-spacing:-0.15px">Protocole SoMachine actif</div>
<svg class="a" style="left:706px;top:483px" width="14" height="14"><rect x="0.5" y="0.5" width="12" height="12" fill="#f6f6f6" stroke="#c9c9c9"/><path d="M3 6.5l2.5 3 5-6" stroke="#b8b8b8" stroke-width="1.2" fill="none"/></svg>
<div class="t g" style="left:724px;top:484px;letter-spacing:-0.15px">Serveur Modbus actif</div>
<svg class="a" style="left:706px;top:506px" width="14" height="14"><rect x="0.5" y="0.5" width="12" height="12" fill="#f6f6f6" stroke="#c9c9c9"/><path d="M3 6.5l2.5 3 5-6" stroke="#b8b8b8" stroke-width="1.2" fill="none"/></svg>
<div class="t g" style="left:724px;top:507px;letter-spacing:-0.15px">Serveur Web actif</div>
<svg class="a" style="left:706px;top:529px" width="14" height="14"><rect x="0.5" y="0.5" width="12" height="12" fill="#f6f6f6" stroke="#c9c9c9"/><path d="M3 6.5l2.5 3 5-6" stroke="#b8b8b8" stroke-width="1.2" fill="none"/></svg>
<div class="t g" style="left:724px;top:530px;letter-spacing:-0.15px">Serveur FTP actif</div>
<svg class="a" style="left:706px;top:552px" width="14" height="14"><rect x="0.5" y="0.5" width="12" height="12" fill="#f6f6f6" stroke="#c9c9c9"/><path d="M3 6.5l2.5 3 5-6" stroke="#b8b8b8" stroke-width="1.2" fill="none"/></svg>
<div class="t g" style="left:724px;top:553px;letter-spacing:-0.15px">Protocole de recherche actif</div>
<svg class="a" style="left:706px;top:575px" width="14" height="14"><rect x="0.5" y="0.5" width="12" height="12" fill="#f6f6f6" stroke="#c9c9c9"/><path d="M3 6.5l2.5 3 5-6" stroke="#b8b8b8" stroke-width="1.2" fill="none"/></svg>
<div class="t g" style="left:724px;top:576px;letter-spacing:-0.15px">Protocole SNMP actif</div>
<svg class="a" style="left:706px;top:597px" width="14" height="14"><rect x="0.5" y="0.5" width="12" height="12" fill="#f6f6f6" stroke="#c9c9c9"/><path d="M3 6.5l2.5 3 5-6" stroke="#b8b8b8" stroke-width="1.2" fill="none"/></svg>
<div class="t g" style="left:724px;top:598px;letter-spacing:-0.15px">Protocole WebVisualisation actif</div>
<div class="gb" style="left:361px;top:657px;width:326px;height:85px;"></div>
<div class="t e" style="left:366px;top:651px;padding:0 3px;background:#f0f0f0">Identification de l'équipement esclave</div>
<div class="gb" style="left:699px;top:660px;width:316px;height:82px;"></div>
<div class="t e" style="left:703px;top:654px;padding:0 3px;background:#f0f0f0">Etat de l'adaptateur</div>
<svg class="a" style="left:366px;top:670px" width="14" height="14"><rect x="0.5" y="0.5" width="12" height="12" fill="#f6f6f6" stroke="#c9c9c9"/><path d="M3 6.5l2.5 3 5-6" stroke="#b8b8b8" stroke-width="1.2" fill="none"/></svg>
<div class="t g" style="left:384px;top:672px;letter-spacing:-0.25px">Serveur DHCP actif</div>
<div class="t" style="left:492px;top:671px;letter-spacing:-0.25px;color:#0a0ac8;text-decoration:underline">Serveur DHCP actif</div>
<div class="t g" style="left:368px;top:691px;letter-spacing:-0.08px;color:#737373">Lorsqu'il est activé, un équipement qui sera ajouté au bus de</div>
<div class="t g" style="left:368px;top:704px;letter-spacing:-0.08px;color:#737373">terrain peut être configuré afin de pouvoir être identifié</div>
<div class="t g" style="left:368px;top:717px;letter-spacing:-0.08px;color:#737373">grâce à son nom ou à son adresse MAC, au lieu de son</div>
<div class="t g" style="left:368px;top:730px;letter-spacing:-0.08px;color:#737373">adresse IP.</div>
<div class="t e" style="left:714px;top:676px;">Adresse MAC</div>
<div class="a" style="left:817px;top:672px;width:141px;height:21px;border:1px solid #646464;background:#f0f0f0"></div>
<div class="t e" style="left:819px;top:676px;letter-spacing:-0.15px">00:80:F4:0C:BE:82</div>
<div class="t e" style="left:714px;top:702px;">Etat du réseau</div>
<div class="a" style="left:817px;top:698px;width:141px;height:21px;border:1px solid #646464;background:#f0f0f0"></div>
<div class="t e" style="left:819px;top:702px;">Erreur</div>
<div class="a" style="left:344px;top:741px;width:1523px;height:5px;background:#f0f0f0"></div>
<div class="a" style="left:344px;top:742px;width:1523px;height:1px;background:#ffffff"></div>
<div class="a" style="left:344px;top:744px;width:1523px;height:1px;background:#d8d8d8"></div>
<!-- messages -->
<div class="a" style="left:343px;top:751px;width:1527px;height:22px;background:#c0ccd9;border-top:1px solid #8a9099;border-bottom:1px solid #c6cad6"></div>
<div class="t" style="left:349px;top:757px;letter-spacing:-0.07px">Total messages - 0 erreur(s), 2 avertissement(s), 10 message(s)</div>
<svg class="a" style="left:1810px;top:755px" width="58" height="16" viewBox="1810 755 58 16">
<path d="M1814.5 761.5h9l-4.5 4.5z" fill="#000"/>
<path d="M1835.5 758.5h6M1836.5 758.5v5M1840.5 758.5v5M1835 763.5h7M1838.5 763.5v4" stroke="#000" stroke-width="1.2" fill="none"/>
<path d="M1855 759l8 8M1863 759l-8 8" stroke="#000" stroke-width="2.2"/>
</svg>
<div class="a" style="left:343px;top:773px;width:1527px;height:26px;background:linear-gradient(#fbfcfc 0%,#f5f6f0 30%,#eaece2 55%,#dcdac4 80%,#cbcbc3 96%)"></div>
<div class="a" style="left:344px;top:775px;width:320px;height:22px;background:#fff"></div>
<div class="a" style="left:650px;top:775px;width:14px;height:22px;background:#f6f6f6"></div>
<div class="t" style="left:348px;top:781px;font-size:11.4px">Compiler</div>
<svg class="a" style="left:640px;top:773px" width="360" height="26" viewBox="640 773 360 26">
<path d="M654.5 785h6l-3 3z" fill="#000"/>
<rect x="671.5" y="775.5" width="295" height="21" fill="#dfe5ee" stroke="#5a85c0"/>
<path d="M750.5 776v20M872.5 776v20" stroke="#5a85c0"/>
<circle cx="680.5" cy="785.5" r="5.5" fill="#d01818"/><path d="M678 783l5 5M683 783l-5 5" stroke="#fff" stroke-width="1.5"/>
<circle cx="760.5" cy="785.5" r="5.5" fill="#f2ee20" stroke="#222" stroke-width=".8"/><path d="M760.5 782v4" stroke="#000" stroke-width="1.6"/><circle cx="760.5" cy="788.3" r=".9" fill="#000"/>
<circle cx="882.5" cy="785.5" r="5.5" fill="#1020c8"/><path d="M882.5 784v5" stroke="#fff" stroke-width="1.6"/><circle cx="882.5" cy="782" r=".9" fill="#fff"/>
<path d="M971.5 778v16" stroke="#c8c8c8"/>
<path d="M979 780l11 11M990 780l-11 11" stroke="#333" stroke-width="1.6"/>

</svg>
<div class="t" style="left:692px;top:780px;font-size:11.4px">0 erreur(s)</div>
<div class="t" style="left:772px;top:780px;font-size:11.4px;letter-spacing:0.1px">2 avertissement(s)</div>
<div class="t" style="left:894px;top:780px;font-size:11.4px">9 message(s)</div>
<div class="a" style="left:343px;top:799px;width:1527px;height:171px;background:#fff;border:1px solid #7a7a7a;border-top:1px solid #6a6a6a"></div>
<div class="a" style="left:344px;top:882px;width:1508px;height:19px;background:#ececec"></div>
<svg class="a" style="left:344px;top:800px" width="1508" height="169" viewBox="344 800 1508 169"><g stroke="#e4e4e4">
<path d="M344 844.5H1852"/>
<path d="M344 863.5H1852"/>
<path d="M344 882.5H1852"/>
<path d="M344 901.5H1852"/>
<path d="M344 920.5H1852"/>
<path d="M344 939.5H1852"/>
<path d="M344 958.5H1852"/>
<path d="M1206.5 800V969"/>
<path d="M1239.5 800V969"/>
<path d="M1359.5 800V969"/>
<path d="M1732.5 800V969"/>
</g>
<circle cx="357.5" cy="872" r="5.3" fill="#f4ef1a" stroke="#333" stroke-width=".8"/><path d="M357.5 868.5v4" transform="translate(0 0)" stroke="#000" stroke-width="1.6"/><circle cx="357.5" cy="874.8" r=".9" fill="#000"/>
<circle cx="357.5" cy="891" r="5.3" fill="#f4ef1a" stroke="#333" stroke-width=".8"/><path d="M357.5 868.5v4" transform="translate(0 19)" stroke="#000" stroke-width="1.6"/><circle cx="357.5" cy="893.8" r=".9" fill="#000"/>
<circle cx="357.5" cy="910" r="5.5" fill="#1222c4"/><path d="M357.5 909v5" stroke="#fff" stroke-width="1.6"/><circle cx="357.5" cy="907" r=".9" fill="#fff"/>
<circle cx="357.5" cy="929" r="5.5" fill="#1222c4"/><path d="M357.5 928v5" stroke="#fff" stroke-width="1.6"/><circle cx="357.5" cy="926" r=".9" fill="#fff"/>
<circle cx="357.5" cy="948" r="5.5" fill="#1222c4"/><path d="M357.5 947v5" stroke="#fff" stroke-width="1.6"/><circle cx="357.5" cy="945" r=".9" fill="#fff"/>
<circle cx="357.5" cy="967" r="5.5" fill="#1222c4"/><path d="M357.5 966v5" stroke="#fff" stroke-width="1.6"/><circle cx="357.5" cy="964" r=".9" fill="#fff"/>
</svg>
<div class="a" style="left:344px;top:968px;width:1508px;height:1px;background:#7a7a7a"></div>
<div class="t" style="left:351px;top:807px;font-size:11.4px;letter-spacing:0.05px">Description</div>
<div class="t" style="left:1245px;top:807px;font-size:11.4px;letter-spacing:0.05px">Projet</div>
<div class="t" style="left:1365px;top:807px;font-size:11.4px;letter-spacing:0.05px">Objet</div>
<div class="t" style="left:1738px;top:807px;font-size:11.4px;letter-spacing:0.05px">Position</div>
<div class="a" style="left:344px;top:826px;width:1508px;height:142px;overflow:hidden">
<div class="t" style="left:25px;top:2px;font-size:11.4px;letter-spacing:0.05px">------ Processus de compilation entamé : application : MyController.Application -------</div>
<div class="t" style="left:25px;top:21px;font-size:11.4px;letter-spacing:0.05px">L’application est actuelle</div>
<div class="t" style="left:25px;top:40px;font-size:11.4px;letter-spacing:0.05px">MyController : POU manquant pour vérifications implicites. Il est recommendé d'ajouter le POU (fonction) CheckBounds au projet</div>
<div class="t" style="left:25px;top:59px;font-size:11.4px;letter-spacing:0.05px">Si le scrutateur EtherNet/IP est configuré, la post-configuration du port Ethernet est ignorée (même si elle est effectuée par l'Assistant le contrôleur).</div>
<div class="t" style="left:899px;top:59px;font-size:11.4px;letter-spacing:0.05px">Test COM</div>
<div class="t" style="left:25px;top:78px;font-size:11.4px;letter-spacing:0.05px">Taille du code créé : 44348 octets</div>
<div class="t" style="left:899px;top:78px;font-size:11.4px;letter-spacing:0.05px">Test COM</div>
<div class="t" style="left:25px;top:97px;font-size:11.4px;letter-spacing:0.05px">Taille des données globales : 28842 octets</div>
<div class="t" style="left:899px;top:97px;font-size:11.4px;letter-spacing:0.05px">Test COM</div>
<div class="t" style="left:25px;top:116px;font-size:11.4px;letter-spacing:0.05px">Taille totale de mémoire allouée aux codes et données : 81656 octets</div>
<div class="t" style="left:899px;top:116px;font-size:11.4px;letter-spacing:0.05px">Test COM</div>
<div class="t" style="left:25px;top:135px;font-size:11.4px;letter-spacing:0.05px">La plage mémoire 0 contient. Mémoire : taille : 120000, adresse la plus élevée utilisée : 120000, le plus grand espace continu et inutilisé : 0 (0 %)</div>
<div class="t" style="left:899px;top:135px;font-size:11.4px;letter-spacing:0.05px">Test COM</div>
<div class="t" style="left:1019px;top:59px;font-size:11.4px;letter-spacing:0.05px">Ethernet_2 [MyController]</div>
</div>
<div class="a" style="left:1852px;top:800px;width:16px;height:168px;background:#f0f0f0"></div>
<div class="a" style="left:1853px;top:819px;width:15px;height:66px;background:#cdcdcd"></div>
<svg class="a" style="left:1852px;top:800px" width="16" height="168"><path d="M4 13l4-4 4 4M4 157l4 4 4-4" stroke="#606060" stroke-width="1.6" fill="none"/></svg>
<div class="a" style="left:1868px;top:799px;width:1px;height:171px;background:#a8a8a8"></div>
<div class="t" style="left:345px;top:981px;letter-spacing:-0.25px">Précompiler :</div>
<svg class="a" style="left:412px;top:979px" width="18" height="16"><path d="M2 8l4.5 4.5L15 3" stroke="#2a9a2a" stroke-width="2.6" fill="none"/></svg>
<div class="t" style="left:444px;top:980px;color:#1a1ab8;text-decoration:underline;letter-spacing:0.1px">OK</div>
<!-- status bar -->
<div class="a" style="left:6px;top:1002px;width:1886px;height:21px;background:#f0f0f0;border-top:1px solid #d0d0d0"></div>
<div class="a" style="left:730px;top:1003px;width:1px;height:20px;background:#d8d8d8"></div>
<div class="a" style="left:1058px;top:1003px;width:1px;height:20px;background:#d8d8d8"></div>
<div class="a" style="left:1156px;top:1003px;width:1px;height:20px;background:#d8d8d8"></div>
<div class="a" style="left:1395px;top:1003px;width:1px;height:20px;background:#d8d8d8"></div>
<div class="a" style="left:1635px;top:1003px;width:1px;height:20px;background:#d8d8d8"></div>
<div class="a" style="left:1874px;top:1003px;width:1px;height:20px;background:#d8d8d8"></div>
<div class="t" style="left:763px;top:1007px;font-size:11.2px;letter-spacing:-0.15px">Dernière compilation :</div>
<svg class="a" style="left:870px;top:1004px" width="170" height="20" viewBox="870 1004 170 20">
<circle cx="879.5" cy="1013" r="5.5" fill="#d01818"/><path d="M877 1010.5l5 5M882 1010.5l-5 5" stroke="#fff" stroke-width="1.5"/>
<circle cx="908" cy="1013" r="5.3" fill="#f2ee20" stroke="#222" stroke-width=".8"/><path d="M908 1009.5v4" stroke="#000" stroke-width="1.6"/><circle cx="908" cy="1015.8" r=".9" fill="#000"/>
<path d="M1019 1013l4.5 4.5 8-9" stroke="#2a9a2a" stroke-width="2.6" fill="none"/>
</svg>
<div class="t" style="left:890px;top:1007px;font-size:11.2px;">0</div>
<div class="t" style="left:919px;top:1007px;font-size:11.2px;font-weight:bold">2</div>
<div class="t" style="left:949px;top:1007px;font-size:11.2px;letter-spacing:-0.25px">Précompiler :</div>
<div class="a" style="left:1063px;top:1005px;width:92px;height:18px;background:#8fe68a"></div>
<div class="t" style="left:1080px;top:1008px;font-size:11.2px;letter-spacing:-0.5px">EXÉCUTION</div>
<div class="t" style="left:1229px;top:1008px;font-size:11.2px;">Programme chargé</div>
<div class="t" style="left:1410px;top:1008px;font-size:11.2px;letter-spacing:0.1px">Programme modifié (changement en ligne)</div>
<div class="t" style="left:1683px;top:1008px;font-size:11.2px;letter-spacing:0.25px">Utilisateur actuel: (personne)</div>
<svg class="a" style="left:1878px;top:1010px" width="12" height="12"><g fill="#b0b0b0"><rect x="8" y="2" width="2" height="2"/><rect x="5" y="5" width="2" height="2"/><rect x="8" y="5" width="2" height="2"/><rect x="2" y="8" width="2" height="2"/><rect x="5" y="8" width="2" height="2"/><rect x="8" y="8" width="2" height="2"/></g></svg>
<svg class="a" style="left:1870px;top:100px" width="23" height="150" viewBox="1870 100 23 150">
<path d="M1893 104.5h-16c-2 0-3.5 1.5-3.5 3.5v74c0 2 1.5 3.5 3.5 3.5h16" fill="#f0f0f0" stroke="#9a9a9a"/>
<path d="M1893 186.5h-16c-2 0-3.5 1.5-3.5 3.5v50c0 2 1.5 3.5 3.5 3.5h16" fill="#f0f0f0" stroke="#9a9a9a"/>
<rect x="1875" y="106" width="15" height="16" fill="#c8c8c8"/><rect x="1877.5" y="107.5" width="10" height="11" fill="#fff" stroke="#000" stroke-width="1.2"/><path d="M1879.5 109v2M1881.5 109v2M1879.5 112v5M1881.5 112v5" stroke="#000" stroke-width="1.1"/><path d="M1884 109l5 4-3 4-3-3z" fill="#888" stroke="#000" stroke-width=".8" stroke-dasharray="1 .6"/><path d="M1885 115.5h4v5h-4z" fill="#ddd" stroke="#000" stroke-width=".8"/><path d="M1884 122.5h6" stroke="#101060" stroke-width="1.8"/>
<path d="M1876.5 188.5l9 9" stroke="#3a2a2a" stroke-width="1.6"/><path d="M1876.5 198.5l6-6" stroke="#222" stroke-width="1.3" stroke-dasharray="1 .7"/><path d="M1883.5 187h3.5v3h-1.5v1" stroke="#2a2a30" stroke-width="1.6" fill="none"/><path d="M1883 195l4-2 2 3-2 4-3 1-2-3z" fill="#a8a880" stroke="#333" stroke-width=".8"/>
</svg>
<div class="t" style="left:1877px;top:130px;width:13px;height:52px;writing-mode:vertical-rl;color:#555;font-size:11px;line-height:13px;letter-spacing:0.1px">Propriétés</div>
<div class="t" style="left:1877px;top:209px;width:13px;height:30px;writing-mode:vertical-rl;color:#555;font-size:11px;line-height:13px;letter-spacing:0.2px">Outils</div>
</body></html>
